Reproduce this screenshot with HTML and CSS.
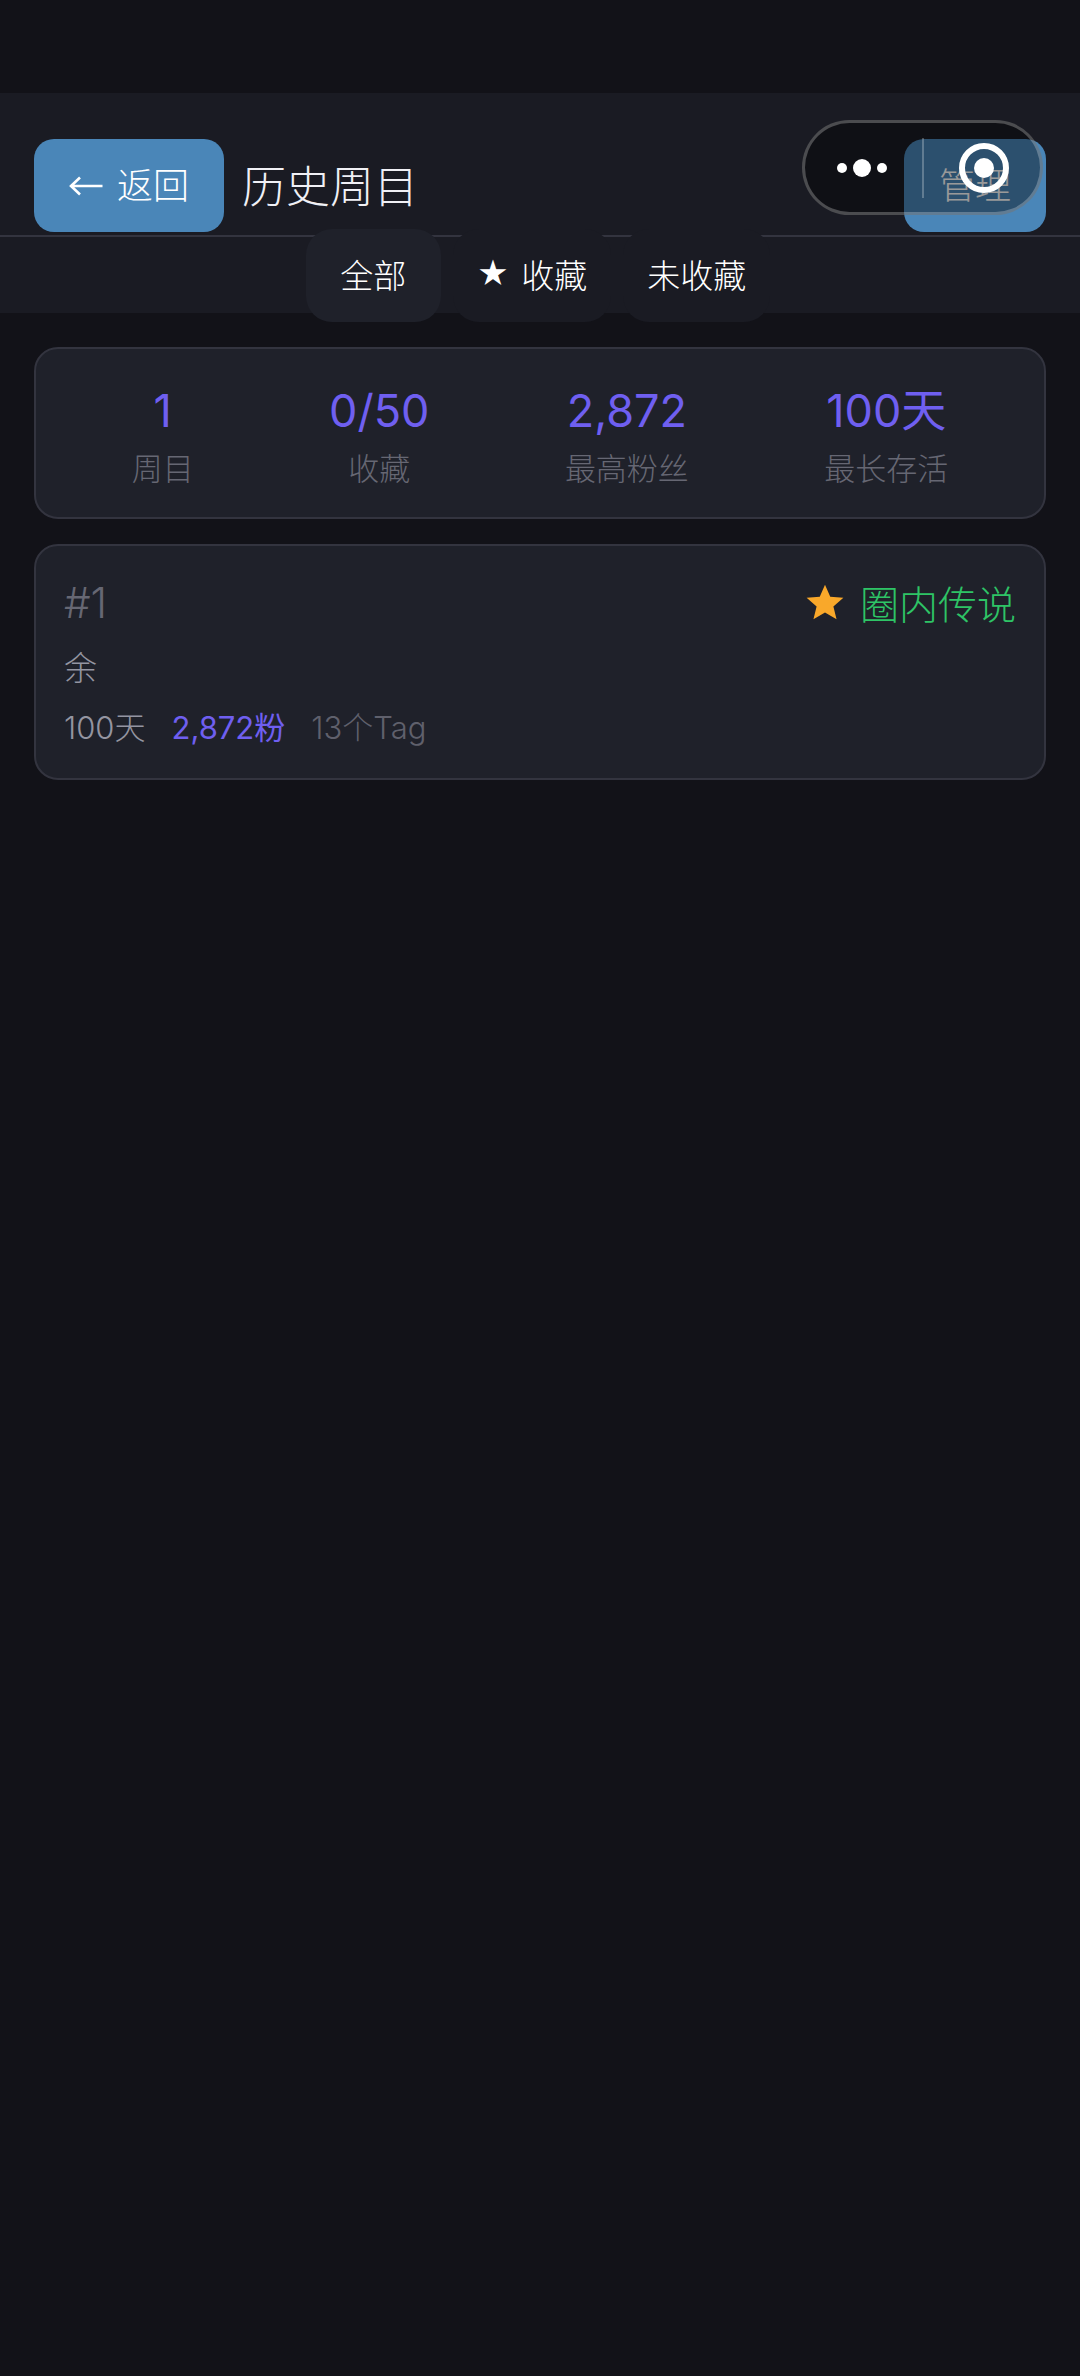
FILE: index.html
```html
<!DOCTYPE html>
<html lang="zh-CN">
<head>
<meta charset="utf-8">
<title>历史周目</title>
<link rel="stylesheet" href="styles.css">
</head>
<body>
<div class="status-spacer"></div>
<header class="top-bar">
  <button class="btn back-btn"><svg class="arrow" viewBox="0 0 34 20" aria-hidden="true"><path d="M33.5 10H2M11 1.5 2 10l9 8.5"/></svg>返回</button>
  <h1 class="title">历史周目</h1>
  <button class="btn manage-btn">管理</button>
</header>
<nav class="filter-bar">
  <div class="chip chip-active">全部</div>
  <div class="chip"><span class="chip-star">★</span>收藏</div>
  <div class="chip">未收藏</div>
</nav>
<main class="content">
  <section class="card stats">
    <div class="stat"><div class="stat-value">1</div><div class="stat-label">周目</div></div>
    <div class="stat"><div class="stat-value">0/50</div><div class="stat-label">收藏</div></div>
    <div class="stat"><div class="stat-value">2,872</div><div class="stat-label">最高粉丝</div></div>
    <div class="stat"><div class="stat-value">100天</div><div class="stat-label">最长存活</div></div>
  </section>
  <section class="card run">
    <div class="run-head">
      <span class="run-index">#1</span>
      <span class="run-rank">
        <svg class="rank-star" viewBox="0 0 40 38" aria-hidden="true"><path d="M20 2.5 L25 14 L37.5 15 L28 23.2 L31 35.5 L20 29 L9 35.5 L12 23.2 L2.5 15 L15 14 Z"/></svg>
        圈内传说
      </span>
    </div>
    <div class="run-name">余</div>
    <div class="run-meta">
      <span class="meta-days">100天</span>
      <span class="meta-fans">2,872粉</span>
      <span class="meta-tags">13个Tag</span>
    </div>
  </section>
</main>
<div class="capsule">
  <svg class="capsule-dots" viewBox="0 0 60 20" aria-hidden="true"><circle cx="6" cy="10" r="5"/><circle cx="26" cy="10" r="9"/><circle cx="46" cy="10" r="5"/></svg>
  <span class="capsule-divider"></span>
  <svg class="capsule-target" viewBox="0 0 50 50" aria-hidden="true"><circle class="ring" cx="25" cy="25" r="22"/><circle cx="25" cy="25" r="10"/></svg>
</div>
</body>
</html>
```
FILE: styles.css
```css
* { box-sizing: border-box; }
html, body { margin: 0; padding: 0; }
body {
  width: 1080px;
  height: 2376px;
  overflow: hidden;
  position: relative;
  background: #121218;
  font-family: Inter, "Noto Sans CJK SC", sans-serif;
  font-weight: 300;
  color: #fff;
}
.status-spacer { height: 93px; }
.top-bar {
  display: flex;
  align-items: center;
  height: 144px;
  padding: 47px 34px 4px;
  background: #1a1b23;
  border-bottom: 2px solid #33343f;
}
.btn {
  display: flex;
  align-items: center;
  height: 93px;
  padding: 0 35px 5px;
  border: 0;
  border-radius: 20px;
  background: #4a86b8;
  color: #fff;
  font: inherit;
  font-size: 36px;
}
.arrow {
  width: 34px;
  height: 20px;
  margin: 5px 14px 0 0;
  fill: none;
  stroke: #fff;
  stroke-width: 2.6;
}
.title {
  margin: 0 0 4px 18px;
  font-size: 44px;
  font-weight: 300;
  color: #f0f0f5;
}
.manage-btn { margin-left: auto; }
.filter-bar {
  display: flex;
  align-items: center;
  justify-content: center;
  gap: 12px;
  height: 76px;
  padding-right: 4px;
  background: #1a1b23;
}
.chip {
  position: relative;
  display: flex;
  align-items: center;
  justify-content: center;
  flex: none;
  height: 93px;
  min-width: 135px;
  padding: 0 24px 3px;
  border-radius: 26px;
  background: #1a1b23;
  font-size: 33px;
}
.chip-active { background: #1f212a; }
.chip-star {
  margin-right: 12px;
  font-size: 31px;
}
.content {
  display: flex;
  flex-direction: column;
  gap: 25px;
  padding: 34px 34px 0;
}
.card {
  background: #1f212a;
  border: 2px solid #33343f;
  border-radius: 24px;
}
.stats {
  display: flex;
  justify-content: space-around;
  height: 172px;
  padding: 32px 28px 0;
}
.stat { text-align: center; }
.stat-value {
  font-size: 45px;
  font-weight: 400;
  line-height: 60px;
  color: #6f5ff0;
}
.stat-label {
  margin-top: 7px;
  font-size: 31px;
  line-height: 42px;
  color: #666773;
}
.run {
  height: 236px;
  padding: 28px 28px 0;
}
.run-head {
  display: flex;
  align-items: center;
  justify-content: space-between;
  height: 56px;
}
.run-index {
  font-size: 42px;
  color: #666773;
}
.run-rank {
  display: flex;
  align-items: center;
  gap: 14px;
  font-size: 39px;
  color: #2ec466;
}
.rank-star { width: 42px; height: 40px; fill: #f9a82a; }
.run-name {
  margin-top: 16px;
  font-size: 33px;
  line-height: 44px;
  color: #9495a1;
}
.run-meta {
  display: flex;
  gap: 26px;
  margin-top: 16px;
  font-size: 31px;
  line-height: 44px;
}
.meta-days { color: #9495a1; }
.meta-fans { color: #6f5ff0; font-weight: 400; }
.meta-tags { color: #5f606c; }
.capsule {
  position: absolute;
  top: 120px;
  left: 802px;
  width: 241px;
  height: 95px;
  border: 3px solid rgba(255, 255, 255, 0.25);
  border-radius: 48px;
  background: rgba(0, 0, 0, 0.4);
}
.capsule-dots {
  position: absolute;
  left: 31px;
  top: 35px;
  width: 60px;
  height: 20px;
  fill: #fff;
}
.capsule-divider {
  position: absolute;
  left: 117px;
  top: 15px;
  width: 2px;
  height: 60px;
  background: rgba(255, 255, 255, 0.25);
}
.capsule-target {
  position: absolute;
  left: 154px;
  top: 20px;
  width: 50px;
  height: 50px;
  fill: #fff;
}
.capsule-target .ring { fill: none; stroke: #fff; stroke-width: 6; }
```
